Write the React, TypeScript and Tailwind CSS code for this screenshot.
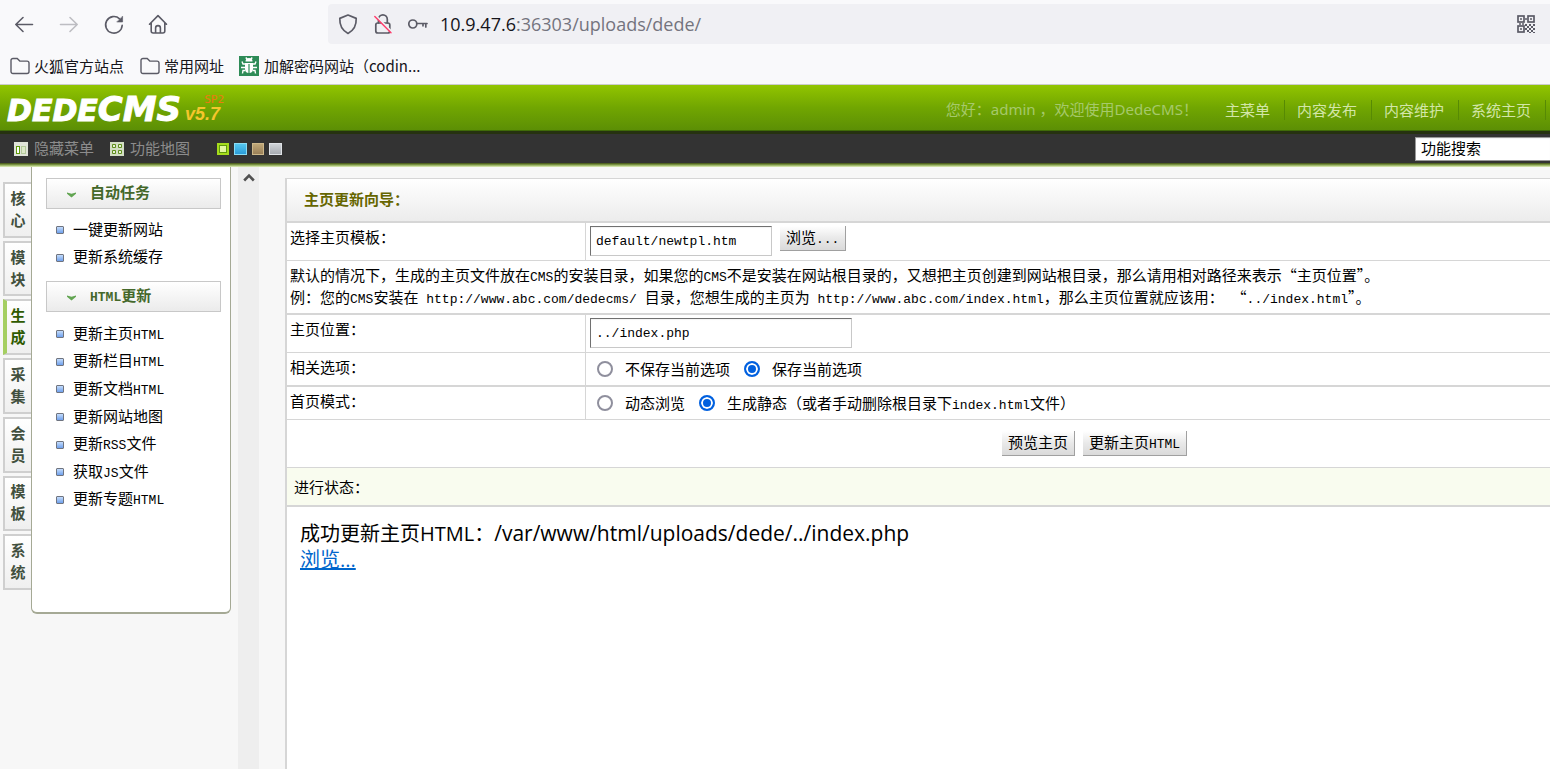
import React from 'react';

const MAIN_TABS = ['核心', '模块', '生成', '采集', '会员', '模板', '系统'];
const ACTIVE_TAB = '生成';

const TOP_LINKS = ['主菜单', '内容发布', '内容维护', '系统主页'];

const AUTO_TASKS = ['一键更新网站', '更新系统缓存'];
const HTML_TASKS = [
  '更新主页HTML',
  '更新栏目HTML',
  '更新文档HTML',
  '更新网站地图',
  '更新RSS文件',
  '获取JS文件',
  '更新专题HTML',
];

// Chinese at 15px, latin runs in a narrower monospace face
function Mixed({ text }: { text: string }) {
  return (
    <span>
      {text.split(/([\x20-\x7e]+)/).map((part, i) =>
        i % 2 ? (
          <span key={i} className="font-['Liberation_Mono',monospace] text-[13px] leading-none">
            {part}
          </span>
        ) : (
          part
        )
      )}
    </span>
  );
}

function FolderIcon() {
  return (
    <svg width="20" height="18" viewBox="0 0 20 18" fill="none" stroke="#5b5b66" strokeWidth="1.4">
      <path d="M1 3.5A2 2 0 0 1 3 1.5h4.2l2.6 2.6H17a2 2 0 0 1 2 2v8.4a2 2 0 0 1-2 2H3a2 2 0 0 1-2-2z" />
    </svg>
  );
}

function BrowserBar() {
  return (
    <div className="flex h-12 items-center">
      <nav className="flex w-[328px] shrink-0 items-center gap-5 pl-3">
        <button aria-label="后退">
          <svg width="24" height="24" viewBox="0 0 24 24" fill="none" stroke="#5b5b66" strokeWidth="1.6" strokeLinecap="round" strokeLinejoin="round">
            <path d="M20.5 12.5H3.8M11 5.5l-7.2 7 7.2 7" />
          </svg>
        </button>
        <button aria-label="前进">
          <svg width="24" height="24" viewBox="0 0 24 24" fill="none" stroke="#bdbdc2" strokeWidth="1.6" strokeLinecap="round" strokeLinejoin="round">
            <path d="M4.5 12.5h16.7M14 5.5l7.2 7-7.2 7" />
          </svg>
        </button>
        <button aria-label="刷新">
          <svg width="24" height="24" viewBox="0 0 24 24" fill="none" stroke="#5b5b66" strokeWidth="1.6" strokeLinecap="round">
            <path d="M22.2 13.2a8.3 8.3 0 1 1-2.6-6.4" />
            <path d="M22.6 4.5v5.5h-5.5z" fill="#5b5b66" strokeWidth="0.6" strokeLinejoin="round" />
          </svg>
        </button>
        <button aria-label="主页">
          <svg width="28" height="24" viewBox="0 0 28 24" fill="none" stroke="#5b5b66" strokeWidth="1.6" strokeLinecap="round" strokeLinejoin="round">
            <path d="M5.5 12.2l8.5-8.6 8.5 8.6M7.2 11v8a2 2 0 0 0 2 2h9.6a2 2 0 0 0 2-2v-8M11.6 21v-5a2.4 2.4 0 0 1 4.8 0v5" />
          </svg>
        </button>
      </nav>
      <div className="flex h-10 flex-1 items-center rounded-l bg-[#f0f0f4] pl-2">
        <svg className="mr-[11px]" width="24" height="24" viewBox="0 0 24 24" fill="none" stroke="#5b5b66" strokeWidth="1.7" strokeLinejoin="round">
          <path d="M12 3l8.2 3.4c.3 6.5-2.3 12-8.2 15C6.100 18.400 3.500 12.900 3.800 6.400z" />
        </svg>
        <svg className="mr-[11px]" width="24" height="24" viewBox="0 0 24 24" fill="none" stroke="#5b5b66" strokeWidth="1.7" strokeLinecap="round">
          <rect x="4.8" y="11" width="14" height="10" rx="2" />
          <path d="M7.5 11V7.3a4.4 4.4 0 0 1 8.8 0V11" />
          <path d="M4.5 3.5L21 20" stroke="#f0f0f4" strokeWidth="2" />
          <path d="M3.8 4.5L20 20.8" stroke="#ff3b6b" strokeWidth="1.4" />
        </svg>
        <svg className="mr-[10px]" width="24" height="24" viewBox="0 0 24 24" fill="none" stroke="#5b5b66" strokeWidth="1.7" strokeLinecap="round">
          <circle cx="6.8" cy="12" r="4" />
          <path d="M10.8 11.5H21M19.8 11.5v3.5M17 11.5v2.3" />
        </svg>
        <div className="flex-1 font-['Open_Sans','Noto_Sans',sans-serif] text-lg text-[#74747e]">
          <span className="text-[#15141a]">10.9.47.6</span>:36303/uploads/dede/
        </div>
        <svg className="mr-[15px]" width="18" height="18" viewBox="0 0 18 18" fill="none" stroke="#5b5b66" strokeWidth="1.7">
          <rect x="1" y="1" width="6" height="6" />
          <rect x="11" y="1" width="6" height="6" />
          <rect x="1" y="11" width="6" height="6" />
          <path d="M3 4h2M13 4h2M3 14h2M8 4h2M2 9h2M5 9h2" />
          <path
            d="M8 9h2v2H8zM12 9h2v2h-2zM16 9h2v2h-2zM10 11h2v2h-2zM14 11h2v2h-2zM8 13h2v2H8zM12 13h2v2h-2zM16 13h2v2h-2zM10 15h2v2h-2zM14 15h2v2h-2zM16 17h2v1h-2zM12 17h2v1h-2z"
            fill="#5b5b66"
            stroke="none"
          />
        </svg>
      </div>
    </div>
  );
}

function Bookmarks() {
  return (
    <div className="flex h-9 items-center pl-[10px] text-[15px] text-[#15141a]">
      <a href="#" className="mr-4 flex items-center gap-1">
        <FolderIcon />
        火狐官方站点
      </a>
      <a href="#" className="mr-[15px] flex items-center gap-1">
        <FolderIcon />
        常用网址
      </a>
      <a href="#" className="flex items-center gap-[5px]">
        <svg width="20" height="20" viewBox="0 0 20 20" fill="#fff" stroke="#fff">
          <rect width="20" height="20" fill="#2e8b57" stroke="none" />
          <path d="M6.5 5.5a3.5 3.5 0 0 1 7 0z" stroke="none" />
          <path d="M6 7h8v6a4 4 0 0 1-8 0z" stroke="none" />
          <path d="M6.8 1.5l1.500 2M13.200 1.500l-1.500 2M3 5.500l1 2.500h2M17 5.500l-1 2.500h-2M2 11.500h4M18 11.500h-4M3.500 17.500l.5-3h2M16.500 17.500l-.5-3h-2" fill="none" strokeWidth="1.400" />
          <path d="M10 8v9" stroke="#2e8b57" strokeWidth="1.200" />
        </svg>
        加解密码网站（codin...
      </a>
    </div>
  );
}

function Header() {
  return (
    <header>
      <div className="flex h-[46px] items-center justify-between border-b border-[#3f6a08] bg-gradient-to-b from-[#92c500] via-[#71a601] to-[#5c8f05] pr-1">
        <div className="relative flex items-center gap-1 pt-1 pl-[7px] font-['DejaVu_Sans',sans-serif] font-bold italic text-white">
          <span className="text-[30px] leading-[30px] [-webkit-text-stroke:1px_white]">
            DEDE<span className="text-[34px]">CMS</span>
          </span>
          <span className="self-end font-['Liberation_Sans',sans-serif] text-lg leading-6 text-[#f5c62c]">v5.7</span>
          <span className="absolute top-1 -right-1 font-['DejaVu_Sans_Mono',monospace] text-[11px] leading-3 font-normal not-italic text-[#ec7a10]">
            SP2
          </span>
        </div>
        <nav className="flex items-center pt-1 text-[15px]">
          <span className="mr-[15px] font-['Noto_Sans','Noto_Sans_CJK_SC',sans-serif] text-[#a6c96b]">
            您好：admin ，欢迎使用DedeCMS！
          </span>
          {TOP_LINKS.map((link) => (
            <a key={link} href="#" className="border-r border-[#578a04] pr-[14px] pl-3 leading-5 text-[#d3e6a8]">
              {link}
            </a>
          ))}
        </nav>
      </div>
      <div className="flex h-8 items-center border-t-[3px] border-[#263210] bg-[#333] pl-[14px] text-[15px] text-[#8c8c8c]">
        <button className="mr-4 flex items-center gap-[6px]">
          <svg width="14" height="14" viewBox="0 0 14 14">
            <rect width="14" height="14" fill="#dfe3d8" />
            <rect x="2.5" y="4.5" width="3" height="7" fill="#fff" stroke="#5f9a0a" />
            <rect x="7.5" y="4.5" width="4" height="7" fill="#dce8c8" stroke="#b3c99a" />
          </svg>
          隐藏菜单
        </button>
        <button className="mr-[27px] flex items-center gap-[6px]">
          <svg width="14" height="14" viewBox="0 0 14 14" fill="#e7f0d8" stroke="#5f8f1c">
            <rect width="14" height="14" fill="#d3dec4" stroke="none" />
            <path d="M2.5 2.5h3v3h-3zM8.5 2.5h3v3h-3zM2.5 8.5h3v3h-3zM8.5 8.5h3v3h-3z" />
          </svg>
          功能地图
        </button>
        <div className="flex flex-1 gap-[5px]">
          <button aria-label="绿色" className="size-3 border-2 border-[#a6dc1c] bg-[#e4f7a0] outline-1 -outline-offset-3 outline-[#5f9a0a]" />
          <button aria-label="蓝色" className="h-3 w-[13px] border border-[#8adcf5] bg-gradient-to-b from-[#55c8f0] to-[#2a9cd8]" />
          <button aria-label="棕色" className="size-3 border border-[#cdb88a] bg-gradient-to-b from-[#c0a878] to-[#9a8058]" />
          <button aria-label="灰色" className="h-3 w-[13px] border border-[#dfe2e6] bg-gradient-to-b from-[#d0d4d8] to-[#a8acb2]" />
        </div>
        <input
          aria-label="功能搜索"
          defaultValue="功能搜索"
          className="h-6 w-[135px] border border-r-0 border-[#999] bg-white pb-[2px] pl-[5px] text-[15px] text-black inset-shadow-xs"
        />
      </div>
      <div className="h-1 bg-gradient-to-b from-[#3f5013] via-[#8ba650] to-[#e4f2c0]" />
    </header>
  );
}

function MenuGroup({ title, children }: { title: string; children: React.ReactNode }) {
  return (
    <section>
      <h2 className="flex h-[31px] items-center border border-[#c8c8c8] bg-gradient-to-b from-white to-[#ebebeb] pb-[2px] pl-5 text-[15px] font-bold text-[#44682a]">
        <svg className="mt-1 mr-[14px]" width="9" height="6" viewBox="0 0 9 6" fill="#62a552">
          <path d="M0 0.5l4.5 1.3L9 .5v1.3L4.5 5.5 0 1.8z" />
        </svg>
        <Mixed text={title} />
      </h2>
      {children}
    </section>
  );
}

function MenuItem({ label }: { label: string }) {
  return (
    <li className="flex flex-1 items-center gap-[9px] pl-[10px]">
      <span className="mt-[3px] size-2 rounded-[1px] border border-[#6f7480] bg-gradient-to-b from-[#c4dcfb] to-[#6fa0ec]" />
      <a href="#" className="leading-5">
        <Mixed text={label} />
      </a>
    </li>
  );
}

function Sidebar() {
  return (
    <aside className="flex w-[259px] shrink-0">
      <nav className="mt-[15px] ml-[3px] flex h-[408px] w-7 flex-col gap-[3px]">
        {MAIN_TABS.map((tab) => (
          <button
            key={tab}
            className={`flex-1 border-2 border-r-0 bg-gradient-to-b from-white to-[#efefef] px-[5px] pb-[2px] text-[15px] leading-[22px] font-semibold ${
              tab === ACTIVE_TAB
                ? 'border-y-[#d0d0d0] border-l-4 border-l-[#a5cf62] pl-[3px] text-[#2f5a00]'
                : 'border-[#cfcfcf] text-[#42503e]'
            }`}
          >
            {tab}
          </button>
        ))}
      </nav>
      <div className="h-[447px] w-[200px] rounded-b-md border-x border-b-2 border-[#a5a995] bg-white px-[9px] pt-[11px] pl-[14px] text-[15px]">
        <MenuGroup title="自动任务">
          <ul className="mt-[6px] mb-[11px] flex h-[55px] flex-col">
            {AUTO_TASKS.map((item) => <MenuItem key={item} label={item} />)}
          </ul>
        </MenuGroup>
        <MenuGroup title="HTML更新">
          <ul className="mt-[7px] flex h-[193px] flex-col">
            {HTML_TASKS.map((item) => <MenuItem key={item} label={item} />)}
          </ul>
        </MenuGroup>
      </div>
      <div className="ml-[7px] flex flex-1 justify-center bg-[#eee] pt-[6px]">
        <svg width="12" height="9" viewBox="0 0 12 9" fill="none" stroke="#505050" strokeWidth="2.6">
          <path d="M1.2 7.5L6 2.7l4.8 4.8" />
        </svg>
      </div>
    </aside>
  );
}

function Row({ label, htmlFor, children, size }: { label: string; htmlFor?: string; children: React.ReactNode; size: string }) {
  return (
    <div className={`flex border-[#d6d6d6] ${size}`}>
      <div className="w-[299px] shrink-0 border-r border-[#d6d6d6] pt-[3px] pl-[3px] leading-[22px]">
        <label htmlFor={htmlFor}>{label}</label>
      </div>
      <div className="flex flex-1">{children}</div>
    </div>
  );
}

function Radio({ name, label, checked }: { name: string; label: string; checked?: boolean }) {
  return (
    <label className="flex items-center gap-3">
      <input
        type="radio"
        name={name}
        defaultChecked={checked}
        className="size-4 appearance-none rounded-full border-2 border-[#8f8f9d] bg-white checked:border-[#0060df] checked:bg-[#0060df] checked:inset-ring-2 checked:inset-ring-white"
      />
      <Mixed text={label} />
    </label>
  );
}

function Button({ text }: { text: string }) {
  return (
    <button type="button" className="h-[25px] border-r border-b border-[#a0a0a0] bg-gradient-to-b from-white via-[#e9e9e9] to-[#dadada] px-[6px] pb-[2px] leading-5">
      <Mixed text={text} />
    </button>
  );
}

const textInput =
  "h-[30px] border border-t-[#707070] border-r-[#c8c8c8] border-b-[#c8c8c8] border-l-[#707070] bg-white px-[5px] font-['Liberation_Mono',monospace] text-[13px] inset-shadow-xs";

function Wizard() {
  return (
    <form className="flex flex-1 flex-col border-t border-l-2 border-[#d6d6d6] bg-white text-[15px]">
      <h1 className="border-b-2 border-[#d6d6d6] bg-gradient-to-b from-white to-[#ececec] pb-[2px] pl-[17px] text-[15px] leading-[40px] font-bold text-[#666600]">
        主页更新向导：
      </h1>
      <Row label="选择主页模板：" htmlFor="template" size="h-[38px] border-b">
        <div className="flex items-start gap-2 pt-[3px] pl-1">
          <input id="template" defaultValue="default/newtpl.htm" className={`w-[182px] ${textInput}`} />
          <Button text="浏览..." />
        </div>
      </Row>
      <p className="h-[54px] border-b-2 border-[#d6d6d6] pt-[3px] pl-[3px] leading-[22px]">
        <Mixed text="默认的情况下，生成的主页文件放在CMS的安装目录，如果您的CMS不是安装在网站根目录的，又想把主页创建到网站根目录，那么请用相对路径来表示“主页位置”。" />
        <br />
        <Mixed text="例：您的CMS安装在 http://www.abc.com/dedecms/ 目录，您想生成的主页为 http://www.abc.com/index.html，那么主页位置就应该用： “../index.html”。" />
      </p>
      <Row label="主页位置：" htmlFor="position" size="h-[38px] border-b">
        <div className="pt-[3px] pl-1">
          <input id="position" defaultValue="../index.php" className={`w-[262px] ${textInput}`} />
        </div>
      </Row>
      <Row label="相关选项：" size="h-[34px] border-b-2">
        <div className="flex gap-[14px] pl-[11px]">
          <Radio name="saveset" label="不保存当前选项" />
          <Radio name="saveset" label="保存当前选项" checked />
        </div>
      </Row>
      <Row label="首页模式：" size="h-[33px] border-b">
        <div className="flex gap-[14px] pl-[11px]">
          <Radio name="showmod" label="动态浏览" />
          <Radio name="showmod" label="生成静态（或者手动删除根目录下index.html文件）" checked />
        </div>
      </Row>
      <div className="flex h-12 items-center justify-center gap-2 border-b border-[#d6d6d6] pl-88">
        <Button text="预览主页" />
        <Button text="更新主页HTML" />
      </div>
      <div className="border-b-2 border-[#d6d6d6] bg-[#f9fcef] pl-[7px] leading-[37px]">进行状态：</div>
      <output className="block pt-[14px] pl-[13px] font-['Open_Sans','Noto_Sans_CJK_SC',sans-serif] text-xl leading-[26px]">
        成功更新主页HTML：<span className="text-[21px] leading-none">/var/www/html/uploads/dede/../index.php</span>
        <br />
        <a href="#" className="text-[#0066cc] underline">浏览...</a>
      </output>
    </form>
  );
}

export default function App() {
  return (
    <div lang="zh-CN" className="flex min-h-screen flex-col bg-[#f7f7f7] font-['Noto_Sans_CJK_SC',sans-serif] text-black">
      <div className="border-b border-[#ccc] bg-[#f9f9fb]">
        <BrowserBar />
        <Bookmarks />
      </div>
      <Header />
      <div className="flex flex-1">
        <Sidebar />
        <main className="ml-[26px] flex flex-1 flex-col pt-[11px]">
          <Wizard />
        </main>
      </div>
    </div>
  );
}
